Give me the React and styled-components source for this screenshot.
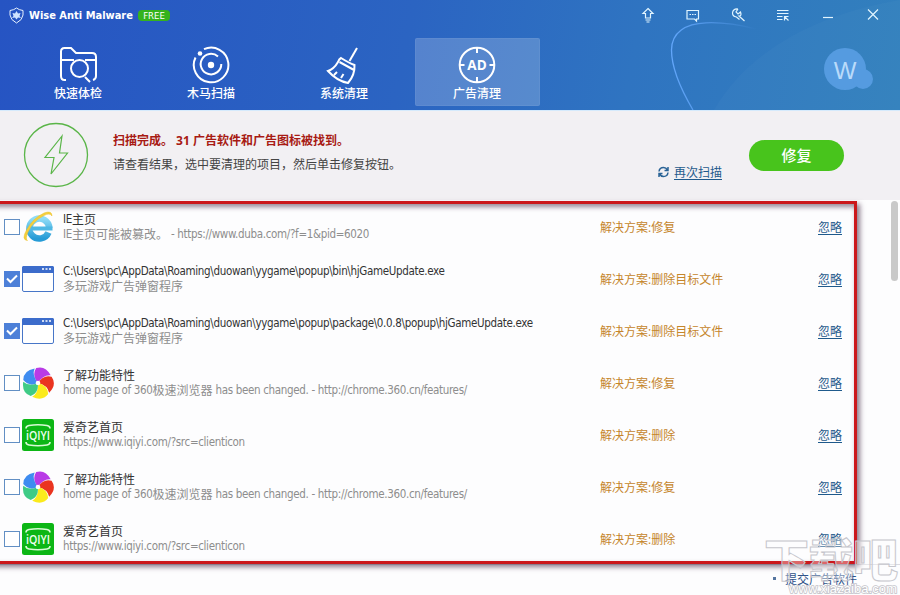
import React from 'react'
import styled, { createGlobalStyle } from 'styled-components'

const GlobalStyle = createGlobalStyle`
  * {
    box-sizing: border-box;
  }
  body {
    margin: 0;
    overflow: hidden;
    font-family: "Open Sans", "Noto Sans CJK SC", sans-serif;
    font-size: 12px;
  }
`

const Window = styled.div`
  position: relative;
  display: flex;
  flex-direction: column;
  width: 900px;
  height: 595px;
  overflow: hidden;
  background: #fdfdfe;
`

const Header = styled.header`
  position: relative;
  flex: none;
  height: 110px;
  background: linear-gradient(100deg, #2654c3 0%, #2b64c2 45%, #2f74c1 70%, #3280bd 100%);
  color: #fff;
`

const Decoration = styled.svg`
  position: absolute;
  top: 0;
  right: 0;
`

const TitleBar = styled.div`
  position: relative;
  display: flex;
  align-items: center;
  height: 30px;
  padding: 0 5px 0 9px;
`

const AppName = styled.span`
  margin: 0 5px 0 5px;
  padding-top: 1px;
  font: bold 11px/16px "DejaVu Sans Condensed", sans-serif;
  white-space: nowrap;
`

const FreeBadge = styled.span`
  width: 32px;
  height: 11px;
  border-radius: 4px;
  background: #35b31c;
  font: 9.500px/12px "DejaVu Sans Condensed", sans-serif;
  text-align: center;
`

const WindowButtons = styled.div`
  display: flex;
  margin-left: auto;
`

const WindowButton = styled.span`
  display: flex;
  justify-content: center;
  width: 45px;
`

const HeaderBody = styled.div`
  position: relative;
  display: flex;
  align-items: flex-start;
  padding: 8px 27px 0 16px;
`

const Tabs = styled.nav`
  display: flex;
  gap: 8px;
`

const Tab = styled.div`
  display: flex;
  flex-direction: column;
  align-items: center;
  width: 125px;
  height: 68px;
  padding: 6px 1px 0 0;
  border: 1px solid ${props => props.$active ? 'rgba(255, 255, 255, 0.05)' : 'transparent'};
  border-radius: 2px;
  background: ${props => props.$active ? 'rgba(255, 255, 255, 0.2)' : 'none'};
  font-weight: 500;
  line-height: 16px;
  font-family: "Noto Sans CJK SC", sans-serif;
`

const Avatar = styled.svg`
  margin: 8px 0 0 auto;
`

const Summary = styled.section`
  display: flex;
  flex: none;
  height: 90px;
  padding: 0 56px 0 23px;
  border-top: 1px solid #d5eafc;
  background: #f2f0f3;
`

const ScanIcon = styled.svg`
  margin-top: 11px;
`

const SummaryText = styled.div`
  margin: 18px 0 0 24px;
  color: #444;
  line-height: 24px;
`

const Found = styled.div`
  color: #a81b14;
  font-weight: bold;
  white-space: pre;
`

const Rescan = styled.div`
  display: flex;
  gap: 5px;
  align-items: center;
  height: 18px;
  margin: 52px 27px 0 auto;
  color: #1f5a96;
`

const Link = styled.a`
  padding-top: 2px;
  border-bottom: 1px solid currentColor;
  color: #1f5a8c;
  line-height: 13px;
  white-space: nowrap;
`

const FixButton = styled.button`
  width: 95px;
  height: 31px;
  margin-top: 29px;
  padding: 0 0 2px;
  border: none;
  border-radius: 16px;
  background: #48c41c;
  color: #fff;
  font: 500 15px/29px "Noto Sans CJK SC", sans-serif;
`

const ListArea = styled.main`
  position: relative;
  display: flex;
  justify-content: space-between;
  height: 365px;
  padding-top: 1px;
  border-bottom: 1px solid #d9d9df;
`

const Rows = styled.div`
  width: 842px;
`

const Row = styled.div`
  display: grid;
  grid-template-columns: 16px 32px 548px 218px 24px;
  align-items: center;
  height: 52px;
  padding-left: 4px;
`

const CheckBox = styled.span`
  display: flex;
  align-items: center;
  justify-content: center;
  width: 16px;
  height: 16px;
  border: 1px solid ${props => props.$checked ? '#4d80d8' : '#628fc4'};
  background: ${props => props.$checked ? '#4d80d8' : '#fff'};
`

const RowIcon = styled.svg`
  margin-left: 2px;
`

const Description = styled.div`
  padding: 0 0 1px 11px;
  line-height: 15px;
  white-space: pre;
`

const Name = styled.div`
  height: 15px;
  color: #333;
`

const Detail = styled.div`
  height: 15px;
  color: #8d8d8d;
`

const Latin = styled.span`
  font-family: "DejaVu Sans Condensed", sans-serif;
  font-size: 11.500px;
  line-height: 12px;
  letter-spacing: -0.330px;
  vertical-align: 1px;
`

const Solution = styled.span`
  color: #c5852b;
`

const ScrollThumb = styled.div`
  width: 7px;
  height: 80px;
  margin-right: 2px;
  border-radius: 4px;
  background: #c9c9c9;
`

const Footer = styled.footer`
  display: flex;
  align-items: center;
  gap: 9px;
  height: 29px;
  padding: 0 0 2px 773px;
  color: #2f5288;
`

const Bullet = styled.i`
  width: 3px;
  height: 3px;
  background: #55759f;
`

/* red marker drawn over the whole result list */
const Marker = styled.div`
  position: absolute;
  top: 201px;
  left: -14px;
  width: 871px;
  height: 363px;
  border: 3px solid #cb171b;
  box-shadow: 3px 3px 5px rgba(50, 20, 50, 0.55), inset 2px 3px 5px rgba(50, 20, 50, 0.5);
`

const Watermark = styled.div`
  position: absolute;
  right: 0;
  bottom: 0;
  width: 136px;
  height: 60px;
  font-family: "Noto Sans CJK SC", sans-serif;
`

const icons = {
  scan: (
    <>
      <path d="M8 35 H6.500 Q3 35 3 31 V6.500 Q3 3 6.500 3 H13 L18 8 H34 Q38 8 38 12 V31 Q38 34 35 35 M3 15 H16 M27 15 H38" />
      <circle cx="21.500" cy="23.500" r="8.500" />
      <path d="M27 32 L32 37" />
    </>
  ),
  trojan: (
    <>
      <path d="M13 4.200 A17.300 17.300 0 1 1 4.500 12.500" />
      <path d="M27 11.500 A10.300 10.300 0 1 0 30.300 19" />
      <circle cx="9" cy="8.500" r="2.300" fill="#fff" stroke="none" />
      <circle cx="20" cy="20" r="3.200" fill="#fff" stroke="none" />
    </>
  ),
  clean: (
    <>
      <path d="M33 3 L25.500 16" />
      <path d="M17 13 Q15 14 14 17 Q10 24 4 26 Q13 36 24 38 Q31 30 30.500 20 Q25 18 17 13 Z M15.500 17 L30 25 M13 27 L10 30 M19.500 29 L17 33" />
    </>
  ),
  ads: (
    <>
      <circle cx="20" cy="20" r="17.300" />
      <path d="M20 3 V8 M20 32 V37 M3 20 H7.500 M32.500 20 H37" />
      <text x="20" y="25" textAnchor="middle" fill="#fff" stroke="none" fontSize="13.500" fontWeight="bold" fontFamily="Open Sans">AD</text>
    </>
  ),
}

const tabs = [
  { icon: 'scan', label: '快速体检' },
  { icon: 'trojan', label: '木马扫描' },
  { icon: 'clean', label: '系统清理' },
  { icon: 'ads', label: '广告清理', active: true },
]

const windowIcons = [
  <path d="M8 1.500 L13 6.500 H10.500 V11 H5.500 V6.500 H3 Z M5.500 13 H10.500 M6.500 15 H9.500" />,
  <path d="M2 3.500 H13.500 V12 H11.500 V14 L9.500 12 H2 Z M4.500 7.500 H6 M7 7.500 H8.500 M9.500 7.500 H11" />,
  <path d="M8 2 L6 5 L8 7 L10.500 5 Q12 9 9 9 L14.500 14 M8 2 Q3 1.500 2.500 6 Q2.500 9.500 6.500 10 L9.500 12.500" />,
  <path d="M2 3.500 H13.500 M2 6.500 H13.500 M2 9.500 H7.500 M2 12.500 H7.500 M9.500 13.500 V9.500 H13.500 M10 10 L13.500 13.500" />,
  <path d="M3 10.500 H13" />,
  <path d="M3 2.500 L13 12.500 M13 2.500 L3 12.500" />,
]

const petals = ['#b93be6', '#ea3420', '#fbea1c', '#3fcb86', '#3f8cf0']

const IEIcon = () => (
  <RowIcon width="32" height="32" viewBox="0 0 32 32">
    <defs>
      <linearGradient id="ie" x1="0" y1="0" x2="0" y2="1">
        <stop offset="0" stopColor="#8edcf7" />
        <stop offset="1" stopColor="#269bd6" />
      </linearGradient>
    </defs>
    <path d="M26.500 21.500 A10 10 0 1 1 27.300 17" fill="none" stroke="url(#ie)" strokeWidth="6.500" />
    <path d="M9 17.500 H30.500" stroke="#4fb8e4" strokeWidth="4" />
    <path d="M5.500 29.500 Q-1 29 4.500 19 Q11 7 22 2 Q30 -1 30 5 Q28 1.500 22 4.500 Q11 10 6 21 Q3 28 5.500 29.500" fill="#f4cf3d" stroke="#edc02a" strokeWidth="0.500" />
  </RowIcon>
)

const AppIcon = () => (
  <RowIcon width="32" height="32" viewBox="0 0 32 32">
    <rect x="0.500" y="3.500" width="31" height="25" rx="1.500" fill="#fff" stroke="#4776c8" />
    <path d="M0 10 V4.500 Q0 3 1.500 3 H30.500 Q32 3 32 4.500 V10 Z" fill="#3c6ccb" />
    <path d="M20 6 H22 M23.500 6 H25.500 M27 6 H29" stroke="#fff" strokeWidth="1.600" />
  </RowIcon>
)

const BrowserIcon = () => (
  <RowIcon width="32" height="32" viewBox="0 0 32 32">
    {petals.map((color, i) => (
      <path
        key={color}
        d="M16 16 Q10.200 7.800 15.500 1 Q25 -1 29.300 9.500 Q22 8 16 16 Z"
        fill={color}
        transform={`rotate(${i * 72 - 5} 16 16)`}
      />
    ))}
    <circle cx="16" cy="16" r="2.300" fill="#fff" />
  </RowIcon>
)

const QiyiIcon = () => (
  <RowIcon width="32" height="32" viewBox="0 0 32 32">
    <rect width="32" height="32" rx="2.500" fill="#0cb615" />
    <path d="M4 9.500 Q4 7 7 6.500 Q16 5 25 6.500 Q28 7 28 9.500 M4 23 Q4 25.500 7 26 Q16 27.500 25 26 Q28 25.500 28 23" fill="none" stroke="#d8fbd4" strokeWidth="1.600" />
    <text x="4" y="21" textLength="24" lengthAdjust="spacingAndGlyphs" fill="#effff0" fontSize="13" fontWeight="600">iQIYI</text>
  </RowIcon>
)

const rowIcons = { ie: IEIcon, app: AppIcon, browser: BrowserIcon, qiyi: QiyiIcon }

const changed = {
  icon: 'browser',
  name: '了解功能特性',
  detail: 'home page of 360极速浏览器 has been changed. - http://chrome.360.cn/features/',
  solution: '修复',
}

const iqiyi = {
  icon: 'qiyi',
  name: '爱奇艺首页',
  detail: 'https://www.iqiyi.com/?src=clienticon',
  solution: '删除',
}

const items = [
  { icon: 'ie', name: 'IE主页', detail: 'IE主页可能被篡改。 - https://www.duba.com/?f=1&pid=6020', solution: '修复' },
  {
    icon: 'app',
    checked: true,
    name: 'C:\\Users\\pc\\AppData\\Roaming\\duowan\\yygame\\popup\\bin\\hjGameUpdate.exe',
    detail: '多玩游戏广告弹窗程序',
    solution: '删除目标文件',
  },
  {
    icon: 'app',
    checked: true,
    name: 'C:\\Users\\pc\\AppData\\Roaming\\duowan\\yygame\\popup\\package\\0.0.8\\popup\\hjGameUpdate.exe',
    detail: '多玩游戏广告弹窗程序',
    solution: '删除目标文件',
  },
  changed,
  iqiyi,
  changed,
  iqiyi,
]

// latin runs are set in a smaller face than the chinese ones
const mixed = text =>
  text.split(/([\x20-\x7e]+)/).map((part, i) => (i % 2 ? <Latin key={i}>{part}</Latin> : part))

const ResultRow = ({ item }) => {
  const Icon = rowIcons[item.icon]
  return (
    <Row>
      <CheckBox $checked={item.checked}>
        {item.checked && (
          <svg width="12" height="10" viewBox="0 0 12 10" fill="none" stroke="#fff" strokeWidth="2">
            <path d="M1 4.500 L4.500 8 L11 1.500" />
          </svg>
        )}
      </CheckBox>
      <Icon />
      <Description>
        <Name>{mixed(item.name)}</Name>
        <Detail>{mixed(item.detail)}</Detail>
      </Description>
      <Solution>解决方案:{item.solution}</Solution>
      <Link>忽略</Link>
    </Row>
  )
}

const App = () => (
  <Window>
    <GlobalStyle />
    <Header>
      <Decoration width="240" height="110" viewBox="660 0 240 110">
        <defs>
          <linearGradient id="fade">
            <stop offset="0" stopColor="#62a6fa" />
            <stop offset="0.350" stopColor="#62a6fa" stopOpacity="0.700" />
            <stop offset="1" stopColor="#62a6fa" stopOpacity="0" />
          </linearGradient>
        </defs>
        <path d="M714 110 Q740 65 792 36 Q840 10 900 0 V110 Z" fill="#fff" opacity="0.025" />
        <path d="M693 110 C683 93 671.500 70 671.500 50 C671.500 32 686 23.500 706 22.800 C722 22 740 25 756 29" fill="none" stroke="url(#fade)" strokeWidth="1.300" />
      </Decoration>
      <TitleBar>
        <svg width="15" height="17" viewBox="0 0 15 17" fill="none" stroke="#e8f3ff">
          <path d="M7.500 1 Q10 3 14 3.500 V8 Q13.500 13 7.500 16 Q1.500 13 1 8 V3.500 Q5 3 7.500 1 Z" />
          <path d="M7.500 4 L9 6.500 L11.500 6 L10.500 9 L12 11 L9 10.500 L7.500 12.500 L6 10.500 L3 11 L4.500 9 L3.500 6 L6 6.500 Z" fill="#cfe3ff" stroke="none" />
        </svg>
        <AppName>Wise Anti Malware</AppName>
        <FreeBadge>FREE</FreeBadge>
        <WindowButtons>
          {windowIcons.map((icon, i) => (
            <WindowButton key={i}>
              <svg width="16" height="17" viewBox="0 0 16 17" fill="none" stroke="#e2f5ff" strokeWidth="1.200">{icon}</svg>
            </WindowButton>
          ))}
        </WindowButtons>
      </TitleBar>
      <HeaderBody>
        <Tabs>
          {tabs.map(tab => (
            <Tab key={tab.label} $active={tab.active}>
              <svg width="40" height="40" viewBox="0 0 40 40" fill="none" stroke="#fff" strokeWidth="2">{icons[tab.icon]}</svg>
              {tab.label}
            </Tab>
          ))}
        </Tabs>
        <Avatar width="50" height="46" viewBox="0 0 50 46">
          <circle cx="22" cy="23" r="21" fill="#559be0" />
          <circle cx="40" cy="33" r="10" fill="#559be0" />
          <text x="22" y="32.500" textAnchor="middle" fill="#b9dafa" fontFamily="Liberation Sans" fontSize="24">W</text>
        </Avatar>
      </HeaderBody>
    </Header>
    <Summary>
      <ScanIcon width="66" height="66" viewBox="0 0 66 66" fill="none" stroke="#5ab548">
        <circle cx="33" cy="33" r="31.500" strokeWidth="1.300" />
        <path d="M39 14 L22 35.500 H31 L28 52 L44.500 31 H36.500 Z" strokeWidth="1.200" />
      </ScanIcon>
      <SummaryText>
        <Found>扫描完成。 31 广告软件和广告图标被找到。</Found>
        <div>请查看结果，选中要清理的项目，然后单击修复按钮。</div>
      </SummaryText>
      <Rescan>
        <svg width="11" height="12" viewBox="0 0 11 12" fill="none" stroke="#2a6396" strokeWidth="1.500">
          <path d="M1 5.500 Q1.500 1.500 5.500 1.500 Q8 1.500 9.500 4 M10 1 V4.500 H6.500 M10 6.500 Q9.500 10.500 5.500 10.500 Q3 10.500 1.500 8 M1 11 V7.500 H4.500" />
        </svg>
        <Link>再次扫描</Link>
      </Rescan>
      <FixButton>修复</FixButton>
    </Summary>
    <ListArea>
      <Rows>
        {items.map((item, i) => <ResultRow key={i} item={item} />)}
      </Rows>
      <ScrollThumb />
    </ListArea>
    <Footer>
      <Bullet />
      提交广告软件
    </Footer>
    <Marker />
    <Watermark>
      <svg width="136" height="60" viewBox="0 0 136 60">
        <text x="0" y="42" textLength="134" fontSize="45" fontWeight="900" fill="#fff" fillOpacity="0.350" stroke="#c6c6cc">下载吧</text>
        <text x="25" y="58" textLength="108" fontFamily="Liberation Sans" fontSize="13" fill="#fff" stroke="#c3c3c9" strokeWidth="1.600" paintOrder="stroke">www.xiazaiba.com</text>
      </svg>
    </Watermark>
  </Window>
)

export default App
